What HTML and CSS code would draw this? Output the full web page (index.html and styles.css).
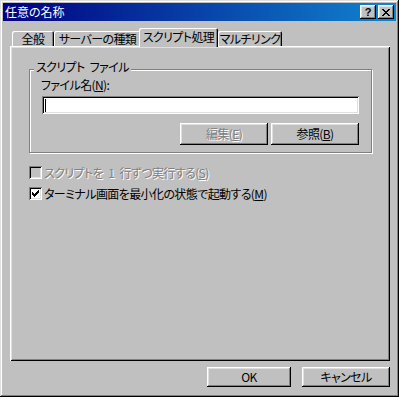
FILE: index.html
```html
<!DOCTYPE html>
<html lang="ja">
<head>
<meta charset="utf-8">
<title>任意の名称</title>
<link rel="stylesheet" href="styles.css">
</head>
<body>
<div class="window">
  <div class="titlebar">
    <span class="title">任意の名称</span>
    <div class="tb-btns">
      <div class="tb-btn help">?</div>
      <div class="tb-btn close">
        <svg width="8" height="7" viewBox="0 0 8 7" shape-rendering="crispEdges">
          <path d="M0 0h2v1H0zM6 0h2v1H6zM1 1h2v1H1zM5 1h2v1H5zM2 2h4v1H2zM3 3h2v1H3zM2 4h4v1H2zM1 5h2v1H1zM5 5h2v1H5zM0 6h2v1H0zM6 6h2v1H6z" fill="#000"/>
        </svg>
      </div>
    </div>
  </div>
  <div class="client">
    <div class="tabs">
      <div class="tab t1">全般</div>
      <div class="tab t2">サーバーの種類</div>
      <div class="tab t3 selected">スクリプト処理</div>
      <div class="tab t4">マルチリンク</div>
    </div>
    <div class="panel">
      <fieldset class="group">
        <legend class="group-title">スクリプト ファイル</legend>
        <div class="group-body">
          <div class="field-label">ファイル名(<u>N</u>):</div>
          <div class="textbox"><span class="caret"></span></div>
          <div class="btn-row">
            <div class="btn disabled w88">編集(<u>E</u>)</div>
            <div class="btn w88">参照(<u>B</u>)</div>
          </div>
        </div>
      </fieldset>
      <div class="check disabled first">
        <span class="box"></span>
        <span class="check-text">スクリプトを 1 行ずつ実行する(<u>S</u>)</span>
      </div>
      <div class="check">
        <span class="box checked">
          <svg width="7" height="7" viewBox="0 0 7 7" shape-rendering="crispEdges">
            <path d="M0 2h1v3H0zM1 3h1v3H1zM2 4h1v3H2zM3 3h1v3H3zM4 2h1v3H4zM5 1h1v3H5zM6 0h1v3H6z" fill="#000"/>
          </svg>
        </span>
        <span class="check-text">ターミナル画面を最小化の状態で起動する(<u>M</u>)</span>
      </div>
    </div>
    <div class="actions">
      <div class="btn ok">OK</div>
      <div class="btn cancel">キャンセル</div>
    </div>
  </div>
</div>
</body>
</html>
```
FILE: styles.css
```css
html, body {
  margin: 0;
  padding: 0;
  background: #c0c0c0;
}

.window {
  width: 399px;
  height: 397px;
  box-sizing: border-box;
  padding: 3px;
  background: #c0c0c0;
  box-shadow: inset -1px -1px #000, inset 1px 1px #dfdfdf, inset -2px -2px #808080, inset 2px 2px #fff;
  font-family: "Noto Sans CJK JP", "Noto Sans", sans-serif;
  font-size: 12px;
  line-height: 14px;
  letter-spacing: -0.6px;
  word-spacing: 3px;
  font-feature-settings: "palt";
  color: #000;
  display: flex;
  flex-direction: column;
}

.titlebar {
  height: 18px;
  display: flex;
  align-items: center;
  background: linear-gradient(90deg, #000080, #1084d0);
  color: #fff;
  padding-left: 2px;
}

.title {
  flex: 1;
  line-height: 18px;
  letter-spacing: 0;
}

.tb-btns {
  display: flex;
  gap: 2px;
  margin-right: 2px;
}

.tb-btn {
  width: 16px;
  height: 14px;
  background: #c0c0c0;
  box-shadow: inset -1px -1px #000, inset 1px 1px #fff, inset -2px -2px #808080, inset 2px 2px #dfdfdf;
  display: flex;
  align-items: center;
  justify-content: center;
  color: #000;
}

.tb-btn.help {
  font-family: "Liberation Sans", Arial, sans-serif;
  font-weight: bold;
  font-size: 11px;
  line-height: 14px;
  letter-spacing: 0;
}

.client {
  display: flex;
  flex-direction: column;
  padding: 0 6px 0 7px;
}

.tabs {
  display: flex;
  align-items: flex-end;
  height: 18px;
  margin-top: 7px;
  padding-left: 2px;
}

.tab {
  height: 15px;
  box-sizing: border-box;
  display: flex;
  align-items: center;
  justify-content: center;
  white-space: nowrap;
  border-radius: 2px 2px 0 0;
  box-shadow: inset 1px 1px #fff, inset -1px 0 #000, inset -2px 0 #808080;
  background: #c0c0c0;
}

.t1 { width: 42px; }
.t2 { width: 87px; }
.t3 { width: 79px; }
.t4 { width: 64px; }

.tab.selected {
  height: 19px;
  margin-left: -2px;
  margin-bottom: -1px;
  position: relative;
  z-index: 1;
  padding-bottom: 1px;
}

.panel {
  height: 315px;
  box-sizing: border-box;
  padding: 14px 0 0 19px;
  box-shadow: inset 1px 1px #fff, inset -1px -1px #000, inset 2px 2px #dfdfdf, inset -2px -2px #808080;
}

.group {
  width: 343px;
  box-sizing: border-box;
  margin: 0;
  padding: 0 0 7px 0;
  border: 1px solid #808080;
  box-shadow: inset 1px 1px #fff, 1px 1px 0 #fff;
  min-width: 0;
}

.group-title {
  margin-left: 4px;
  padding: 0 2px 4px;
  line-height: 14px;
  background: #c0c0c0;
}

.group-body {
  padding: 0 12px 0 11px;
  display: flex;
  flex-direction: column;
}

.field-label {
  line-height: 14px;
}

.textbox {
  margin: 4px 0 0 1px;
  width: 317px;
  height: 18px;
  box-sizing: border-box;
  background: #fff;
  box-shadow: inset 1px 1px #808080, inset -1px -1px #fff, inset 2px 2px #000, inset -2px -2px #dfdfdf;
  display: flex;
  align-items: center;
  padding-left: 3px;
}

.caret {
  width: 1px;
  height: 13px;
  background: #000;
}

.btn-row {
  display: flex;
  justify-content: flex-end;
  gap: 3px;
  margin-top: 9px;
}

.btn {
  height: 22px;
  box-sizing: border-box;
  background: #c0c0c0;
  box-shadow: inset -1px -1px #000, inset 1px 1px #fff, inset -2px -2px #808080, inset 2px 2px #dfdfdf;
  display: flex;
  align-items: center;
  justify-content: center;
  white-space: nowrap;
}

.w88 { width: 88px; }

.btn.disabled,
.check.disabled .check-text {
  color: #808080;
  text-shadow: 1px 1px 0 #fff;
}

.check {
  display: flex;
  align-items: center;
  height: 13px;
  margin-top: 8px;
  line-height: 13px;
}

.check.first {
  margin-top: 13px;
}

.box {
  width: 13px;
  height: 13px;
  box-sizing: border-box;
  margin-right: 2px;
  background: #fff;
  box-shadow: inset 1px 1px #808080, inset -1px -1px #fff, inset 2px 2px #000, inset -2px -2px #dfdfdf;
  display: flex;
  align-items: center;
  justify-content: center;
  flex: none;
}

.check.disabled .box {
  background: #c0c0c0;
}

.check-text {
  white-space: nowrap;
}

.actions {
  display: flex;
  justify-content: flex-end;
  gap: 11px;
  margin-top: 6px;
}

.actions .btn {
  height: 20px;
}

.ok { width: 84px; }
.cancel { width: 88px; }
```
